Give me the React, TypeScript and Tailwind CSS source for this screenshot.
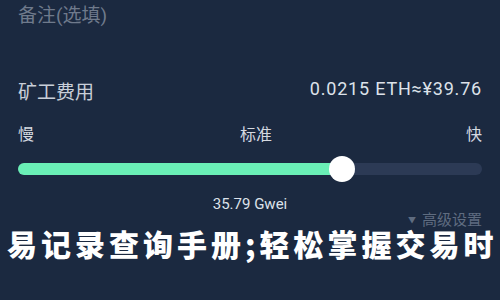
export default function App() {
  return (
    <main
      className="relative w-[500px] h-[300px] overflow-hidden bg-[#1b2940] text-white"
      style={{ fontFamily: '"Roboto", "Noto Sans CJK SC", sans-serif' }}
    >
      <div className="px-[18px]">
        {/* Memo */}
        <div className="pt-[4px] text-[19px] leading-[24px] text-[#6f7a8c]">备注(选填)</div>

        {/* Gas fee */}
        <div className="mt-[53px] flex items-start justify-between">
          <span className="text-[19px] leading-[24px] text-[#c9cfd9]">矿工费用</span>
          <span className="-mt-[4px] text-[18px] leading-[24px] tracking-[0.8px] text-[#dde2ea]">0.0215 ETH≈¥39.76</span>
        </div>

        {/* Slider labels */}
        <div className="mt-[20px] flex items-center justify-between text-[16px] leading-[20px] text-[#d5d9e0]">
          <span>慢</span>
          <span className="pl-[12px]">标准</span>
          <span>快</span>
        </div>

        {/* Slider */}
        <div className="relative mt-[18px] h-[12px] rounded-full bg-[#2c3a55]">
          <div className="h-full w-[324px] rounded-full bg-[#6aefb6]" />
          <div className="absolute left-[311px] top-[-7px] h-[26px] w-[26px] rounded-full bg-white" />
        </div>

        <div className="mt-[20px] text-center text-[15px] leading-[18px] text-[#dde2ea]">35.79 Gwei</div>

        <div className="mt-[2px] flex items-center justify-end gap-[6px] text-[15px] leading-[11px] text-[#5f6c80]">
          <span className="text-[8px]">▼</span>
          <span>高级设置</span>
        </div>
      </div>

      {/* Overlay headline */}
      <div
        className="absolute left-[7px] top-[230px] whitespace-nowrap text-[30px] font-black leading-[26px] tracking-[4px] text-white"
        style={{ fontFamily: '"Noto Sans CJK SC", sans-serif' }}
      >
        易记录查询手册;轻松掌握交易时
      </div>
    </main>
  );
}
